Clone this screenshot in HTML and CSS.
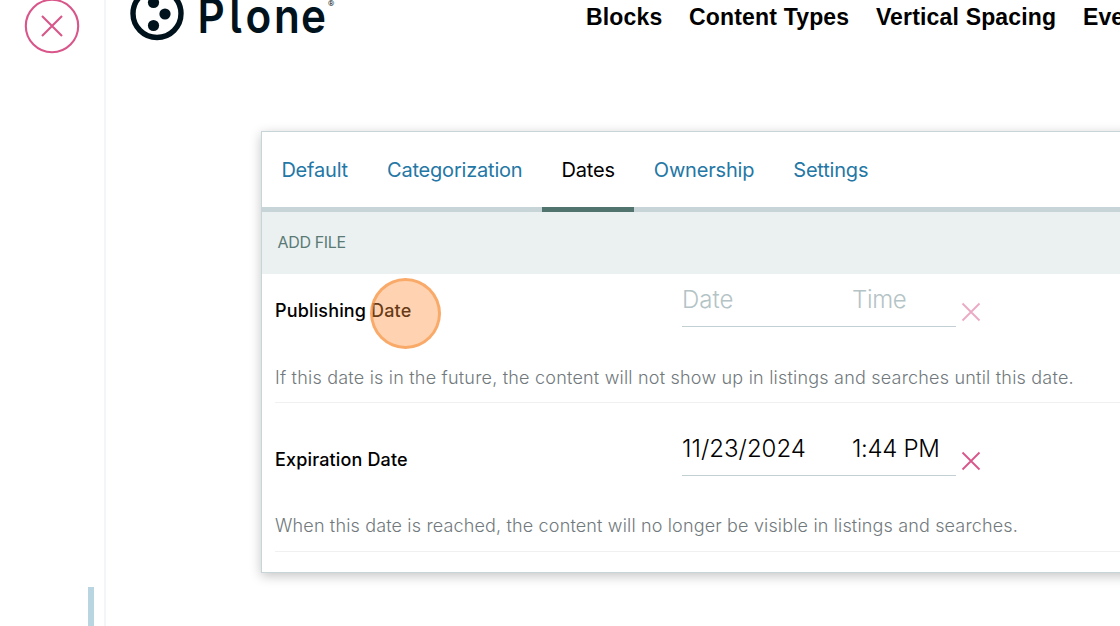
FILE: index.html
```html
<!DOCTYPE html>
<html lang="en">
<head>
<meta charset="utf-8">
<title>Add File</title>
<link rel="stylesheet" href="styles.css">
</head>
<body>
<aside class="toolbar">
  <svg class="cancel" viewBox="0 0 56 56" fill="none"><circle cx="28" cy="28" r="26.2"/><path d="M18 18 38 38M38 18 18 38"/></svg>
  <div class="handle"></div>
</aside>
<main class="page">
  <header class="header">
    <svg class="logo" viewBox="0 0 210 56">
      <circle cx="27" cy="28.5" r="24" fill="none" stroke="#00121c" stroke-width="5.4"/>
      <g fill="#00121c"><circle cx="23.5" cy="17.5" r="5.6"/><circle cx="35" cy="29" r="5.6"/><circle cx="23.5" cy="40.5" r="5.6"/></g>
      <text class="wordmark" transform="translate(67.5 47.5) scale(.88 1)" x="0 36 54.5 87 117.5" y="0">Plone</text>
      <text class="registered" x="198" y="21">®</text>
    </svg>
    <nav class="nav"><a>Blocks</a><a>Content Types</a><a>Vertical Spacing</a><a>Events</a></nav>
  </header>
  <form class="form">
    <div class="tabs"><a class="tab">Default</a><a class="tab">Categorization</a><a class="tab active">Dates</a><a class="tab">Ownership</a><a class="tab">Settings</a></div>
    <div class="caption">ADD FILE</div>
    <section class="field first">
      <div class="row">
        <label class="label">Publishing Date<span class="click"></span></label>
        <div class="inputs empty"><span class="date">Date</span><span class="time">Time</span></div>
        <svg class="clear faded" viewBox="0 0 20 20"><path d="M1.5 1.5 18.5 18.5M18.5 1.5 1.5 18.5"/></svg>
      </div>
      <p class="help">If this date is in the future, the content will not show up in listings and searches until this date.</p>
    </section>
    <section class="field">
      <div class="row">
        <label class="label">Expiration Date</label>
        <div class="inputs"><span class="date">11/23/2024</span><span class="time">1:44 PM</span></div>
        <svg class="clear" viewBox="0 0 20 20"><path d="M1.5 1.5 18.5 18.5M18.5 1.5 1.5 18.5"/></svg>
      </div>
      <p class="help second">When this date is reached, the content will no longer be visible in listings and searches.</p>
    </section>
  </form>
</main>
</body>
</html>
```

FILE: styles.css
```css
* { box-sizing: border-box; }
body { margin: 0; width: 1120px; height: 626px; display: flex; overflow: hidden; background: #fff; color: #000; font-family: Inter, sans-serif; }
.toolbar { width: 106px; flex: none; border-right: 2px solid #f3f6f8; display: flex; flex-direction: column; justify-content: space-between; }
.cancel { width: 56px; height: 56px; margin: -2.5px 0 0 24px; stroke: #d9568a; stroke-width: 2.1; }
.handle { width: 6px; height: 39px; margin-left: 88px; background: #b9d5e2; }
.page { flex: 1; min-width: 0; overflow: hidden; }
.header { height: 131px; display: flex; padding-left: 24px; }
.logo { width: 210px; height: 56px; margin-top: -15px; flex: none; overflow: visible; }
.wordmark { font: 600 48px Inter, sans-serif; font-feature-settings: "cv05"; fill: #00121c; }
.registered { font: 8px Roboto, sans-serif; fill: #00121c; }
.nav { display: flex; gap: 26.6px; margin: 4px 0 0 246px; font: bold 23px/27px "Liberation Sans", Arial, sans-serif; letter-spacing: .17px; white-space: nowrap; }
.form { width: 1000px; height: 442px; margin-left: 155px; border: 1px solid #c7d5d8; background: #fff; box-shadow: 0 3px 11px rgba(0,0,0,.23); }
.tabs { height: 80px; display: flex; border-bottom: 5px solid #c7d5d8; }
.tab { height: 80px; padding: 0 19.7px 0 19.4px; line-height: 76px; font-size: 20px; letter-spacing: -.2px; color: #2477a5; border-bottom: 5px solid transparent; }
.tab.active { color: #000; border-color: #51746f; }
.caption { height: 62px; padding-left: 15.5px; line-height: 61px; background: #ebf1f1; color: #5a7a76; font-size: 16px; letter-spacing: -.35px; }
.field { margin-left: 13px; border-bottom: 1px solid #eef0f1; }
.field.first { height: 129px; }
.field:not(.first) { height: 149px; padding-top: 20px; }
.row { display: flex; height: 53px; }
.label { position: relative; width: 407px; padding-top: 22px; line-height: 30px; font-size: 18px; font-weight: 500; letter-spacing: .15px; }
.click { position: absolute; left: 94.5px; top: 3.5px; width: 71px; height: 71px; border-radius: 50%; border: 3px solid rgba(246,151,72,.7); background: rgba(255,145,60,.4); }
.inputs { width: 274px; height: 53px; display: flex; border-bottom: 1px solid #c2d0d3; font-size: 24px; font-weight: 300; line-height: 52px; }
.date { width: 170px; }
.time { letter-spacing: -.35px; }
.empty { color: #b4c3c6; }
.clear { width: 20px; height: 20px; margin: 27.5px 0 0 5px; fill: none; stroke: #d9568a; stroke-width: 1.8; }
.faded { opacity: .5; }
.help { margin: 36.5px 0 0; line-height: 28px; font-size: 18px; font-weight: 300; letter-spacing: .206px; color: #71797d; white-space: nowrap; }
.second { margin-top: 35.5px; letter-spacing: .155px; }
```
